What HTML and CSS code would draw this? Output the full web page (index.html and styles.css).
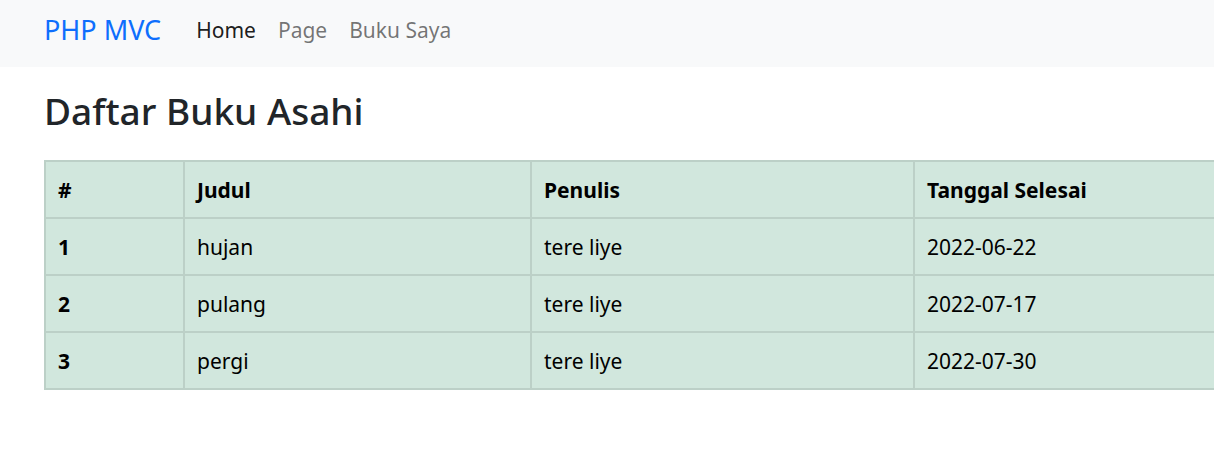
FILE: index.html
```html
<!DOCTYPE html>
<html lang="id">
<head>
<meta charset="utf-8">
<title>PHP MVC</title>
<link rel="stylesheet" href="styles.css">
</head>
<body>
<nav class="navbar">
  <a class="brand" href="#">PHP MVC</a>
  <ul class="nav">
    <li><a class="nav-link active" href="#">Home</a></li>
    <li><a class="nav-link" href="#">Page</a></li>
    <li><a class="nav-link" href="#">Buku Saya</a></li>
  </ul>
</nav>
<main class="container">
  <h1 class="title">Daftar Buku Asahi</h1>
  <table class="table">
    <colgroup>
      <col class="c1"><col class="c2"><col class="c3"><col class="c4">
    </colgroup>
    <thead>
      <tr><th>#</th><th>Judul</th><th>Penulis</th><th>Tanggal Selesai</th></tr>
    </thead>
    <tbody>
      <tr><th>1</th><td>hujan</td><td>tere liye</td><td>2022-06-22</td></tr>
      <tr><th>2</th><td>pulang</td><td>tere liye</td><td>2022-07-17</td></tr>
      <tr><th>3</th><td>pergi</td><td>tere liye</td><td>2022-07-30</td></tr>
    </tbody>
  </table>
</main>
</body>
</html>
```
FILE: styles.css
```css
html, body {
  margin: 0;
  padding: 0;
  overflow: hidden;
}
body {
  font-family: "Noto Sans", "Open Sans", sans-serif;
  font-size: 21px;
  line-height: 1.5;
  color: #212529;
  background: #fff;
}
.navbar {
  display: flex;
  align-items: center;
  height: 67px;
  padding: 0 44px 6px;
  background: #f8f9fa;
  box-sizing: border-box;
}
.brand {
  font-size: 27px;
  color: #0d6efd;
  text-decoration: none;
  margin-right: 24px;
  line-height: 1.5;
}
.nav {
  list-style: none;
  margin: 0;
  padding: 0;
  display: flex;
}
.nav-link {
  display: block;
  padding: 0 11px;
  color: rgba(0, 0, 0, 0.55);
  text-decoration: none;
}
.nav-link.active {
  color: rgba(0, 0, 0, 0.9);
}
.container {
  padding: 0 44px;
}
.title {
  font-size: 37px;
  font-weight: 500;
  line-height: 1.2;
  margin: 22px 0 27px;
}
.table {
  border-collapse: collapse;
  width: 1400px;
  table-layout: fixed;
  background: #d1e7dd;
  color: #000;
}
.c1 { width: 139px; }
.c2 { width: 347px; }
.c3 { width: 383px; }
.c4 { width: 531px; }
.table th, .table td {
  border: 2px solid #bcd0c7;
  padding: 13px 12px 12px;
  text-align: left;
  vertical-align: top;
  line-height: 30px;
}
.table th {
  font-weight: 700;
}
.table td {
  font-weight: 400;
}
```
